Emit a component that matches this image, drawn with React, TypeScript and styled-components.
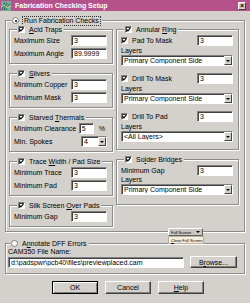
import React from 'react';
import styled, { createGlobalStyle } from 'styled-components';

const GlobalStyle = createGlobalStyle`
	html, body {
		margin: 0;
		padding: 0;
		background: #d4d0cc;
	}
	body {
		font-family: 'Liberation Sans', Arial, sans-serif;
		font-size: 7px;
		color: #000;
	}
	* {
		box-sizing: border-box;
	}
`;

const Window = styled.div`
	position: relative;
	width: 250px;
	height: 303px;
	background: #d4d0cc;
	overflow: hidden;
`;
const TitleBar = styled.div`
	display: flex;
	align-items: center;
	gap: 4px;
	height: 11px;
	padding: 0 4px 0 1px;
	background: #b5528c;
	color: #fff;
	font-weight: bold;
	font-size: 7px;
`;
const Title = styled.span`
	flex: 1;
`;
const CloseBox = styled.div`
	width: 8px;
	height: 8px;
	display: flex;
	align-items: center;
	justify-content: center;
	background: #d4d0cc;
	border: 1px solid;
	border-color: #fff #404040 #404040 #fff;
	color: #000;
	font-size: 7px;
	line-height: 1;
`;
const Body = styled.div`
	padding: 5px 5px 0 5px;
`;
const Group = styled.fieldset<{ $pad?: string; $top?: number }>`
	margin: ${({ $top }) => $top ?? 0}px 0 0;
	min-width: 0;
	padding: ${({ $pad }) => $pad || '0 5px 3px 4px'};
	border: 1px solid #8c8c8c;
	box-shadow: inset 1px 1px 0 #fff, 1px 1px 0 #fff;
`;
const Legend = styled.legend<{ $indent?: number }>`
	display: flex;
	align-items: center;
	gap: 4px;
	height: 9px;
	line-height: 9px;
	padding: 0 2px 0 1px;
	margin-left: ${({ $indent }) => $indent ?? 3}px;
	background: #d4d0cc;
	white-space: nowrap;
`;
const Focus = styled.span`
	outline: 1px dotted #333;
	padding: 0 1px;
	line-height: 8px;
`;
const Columns = styled.div`
	display: grid;
	grid-template-columns: 104px 123px;
	column-gap: 3px;
	align-items: start;
`;
const Stack = styled.div`
	display: flex;
	flex-direction: column;
	gap: 5px;
`;
const Row = styled.div<{ $h?: number }>`
	display: flex;
	align-items: center;
	height: ${({ $h }) => $h ?? 13}px;
	white-space: nowrap;
`;
const Label = styled.span`
	flex: 1;
`;
const SmallLabel = styled.div`
	height: 8px;
	line-height: 8px;
`;
const TextBox = styled.input<{ $w?: number }>`
	width: ${({ $w }) => $w ?? 36}px;
	height: 11px;
	padding: 0 2px;
	margin: 0;
	font: inherit;
	font-size: 7px;
	color: #000;
	background: #fff;
	border: 1px solid;
	border-color: #808080 #fff #fff #808080;
	box-shadow: inset 1px 1px 0 #404040;
	outline: none;
`;
const PathBox = styled(TextBox)`
	flex: 1;
`;
const Unit = styled.span`
	margin-left: 5px;
	margin-right: 2px;
`;
const Combo = styled.div<{ $w?: number }>`
	display: flex;
	align-items: center;
	width: ${({ $w }) => ($w ? `${$w}px` : '100%')};
	height: 11px;
	padding-left: 2px;
	background: #fff;
	border: 1px solid;
	border-color: #808080 #fff #fff #808080;
	box-shadow: inset 1px 1px 0 #404040;
	white-space: nowrap;
`;
const ComboText = styled.span`
	flex: 1;
	overflow: hidden;
`;
const ComboButton = styled.span`
	width: 8px;
	height: 9px;
	display: flex;
	align-items: center;
	justify-content: center;
	background: #d4d0cc;
	border: 1px solid;
	border-color: #fff #404040 #404040 #fff;
`;
const Arrow = styled.span`
	width: 0;
	height: 0;
	border-left: 2px solid transparent;
	border-right: 2px solid transparent;
	border-top: 2px solid #000;
`;
const Box = styled.span`
	width: 7px;
	height: 7px;
	flex: none;
	display: inline-flex;
	background: #fff;
	border: 1px solid;
	border-color: #808080 #fff #fff #808080;
	box-shadow: inset 1px 1px 0 #404040;
`;
const Radio = styled.span<{ $on?: boolean }>`
	width: 7px;
	height: 7px;
	flex: none;
	border-radius: 50%;
	background: #fff;
	border: 1px solid #808080;
	display: inline-flex;
	align-items: center;
	justify-content: center;
	&::after {
		content: '';
		width: 2px;
		height: 2px;
		border-radius: 50%;
		background: ${({ $on }) => ($on ? '#000' : 'transparent')};
	}
`;
const CheckLine = styled.span`
	display: flex;
	align-items: center;
	gap: 4px;
	flex: 1;
`;
const Triplet = styled.div`
	display: flex;
	flex-direction: column;
	& + & {
		margin-top: 6px;
	}
`;
const FileRow = styled.div`
	display: flex;
	align-items: center;
	gap: 6px;
	height: 12px;
`;
const Button = styled.div<{ $w?: number; $h?: number; $default?: boolean }>`
	width: ${({ $w }) => $w ?? 46}px;
	height: ${({ $h }) => $h ?? 13}px;
	display: flex;
	align-items: center;
	justify-content: center;
	background: #d4d0cc;
	border: 1px solid;
	border-color: ${({ $default }) =>
		$default ? '#000' : '#fff #404040 #404040 #fff'};
	box-shadow: ${({ $default }) =>
		$default
			? 'inset 1px 1px 0 #fff, inset -1px -1px 0 #808080'
			: 'inset -1px -1px 0 #808080'};
`;
const ButtonRow = styled.div`
	display: flex;
	gap: 7px;
	padding-left: 47px;
	margin-top: 7px;
`;
const FullScreenBar = styled.div`
	position: absolute;
	left: 168px;
	top: 228px;
	width: 35px;
	height: 8px;
	display: flex;
	align-items: center;
	justify-content: space-between;
	padding: 0 2px;
	background: #c8c4c0;
	border: 1px solid;
	border-color: #fff #606060 #606060 #fff;
	font-size: 4px;
	white-space: nowrap;
`;
const FullScreenMenu = styled.div`
	position: absolute;
	left: 168px;
	top: 236px;
	width: 36px;
	height: 8px;
	display: flex;
	align-items: center;
	padding: 0 2px;
	background: #f4efdc;
	border: 1px solid #b8b0a0;
	font-size: 4px;
	white-space: nowrap;
`;

function Check() {
	return (
		<Box>
			<svg width="5" height="5" viewBox="0 0 5 5">
				<path d="M0.6 2.4 L1.9 3.8 L4.4 0.8" fill="none" stroke="#000" strokeWidth="1.1" />
			</svg>
		</Box>
	);
}

function AppIcon() {
	return (
		<svg width="10" height="10" viewBox="0 0 10 10">
			<rect width="10" height="10" fill="#7aa89a" />
			<path d="M1 9 C2 5 3 3 4 1 M3 9 C4 6 5 4 6 2 M5 9 C6 6 7 5 9 3" stroke="#1d6b5a" strokeWidth="1" fill="none" />
			<path d="M0 6 L3 4 L6 7 L10 5" stroke="#d8e8a0" strokeWidth="0.8" fill="none" />
		</svg>
	);
}

function Field({ label, value, w }: { label: string; value: string; w?: number }) {
	return (
		<Row>
			<Label>{label}</Label>
			<TextBox $w={w} defaultValue={value} readOnly />
		</Row>
	);
}

function Dropdown({ text, w }: { text: string; w?: number }) {
	return (
		<Combo $w={w}>
			<ComboText>{text}</ComboText>
			<ComboButton>
				<Arrow />
			</ComboButton>
		</Combo>
	);
}

function CheckGroup({
	title,
	pad,
	children,
}: {
	title: React.ReactNode;
	pad?: string;
	children: React.ReactNode;
}) {
	return (
		<Group $pad={pad}>
			<Legend>
				<Check />
				<span>{title}</span>
			</Legend>
			{children}
		</Group>
	);
}

function LayerCheck({ label, value, layer }: { label: string; value: string; layer: string }) {
	return (
		<Triplet>
			<Row>
				<CheckLine>
					<Check />
					{label}
				</CheckLine>
				<TextBox defaultValue={value} readOnly />
			</Row>
			<SmallLabel>Layers</SmallLabel>
			<Dropdown text={layer} />
		</Triplet>
	);
}

export default function App() {
	return (
		<Window>
			<GlobalStyle />
			<TitleBar>
				<AppIcon />
				<Title>Fabrication Checking Setup</Title>
				<CloseBox>×</CloseBox>
			</TitleBar>
			<Body>
				<Group $pad="0 5px 4px 3px">
					<Legend $indent={2}>
						<Radio $on />
						<Focus>Run Fabrication Checks</Focus>
					</Legend>
					<Columns>
						<Stack>
							<CheckGroup title={<><u>A</u>cid Traps</>}>
								<Field label="Maximum Size" value="3" />
								<Field label="Maximum Angle" value="89.9999" />
							</CheckGroup>
							<CheckGroup title={<><u>S</u>livers</>}>
								<Field label="Minimum Copper" value="3" />
								<Field label="Minimum Mask" value="3" />
							</CheckGroup>
							<CheckGroup title={<>Starved <u>T</u>hermals</>}>
								<Row>
									<Label>Minimum Clearance</Label>
									<TextBox $w={15} defaultValue="5" readOnly />
									<Unit>%</Unit>
								</Row>
								<Row>
									<Label>Min. Spokes</Label>
									<Dropdown text="4" w={26} />
								</Row>
							</CheckGroup>
							<CheckGroup title={<>Trace <u>W</u>idth / Pad Size</>}>
								<Field label="Minimum Trace" value="3" />
								<Field label="Minimum Pad" value="3" />
							</CheckGroup>
							<CheckGroup title={<>Silk Screen <u>O</u>ver Pads</>}>
								<Field label="Minimum Gap" value="3" />
							</CheckGroup>
						</Stack>
						<Stack>
							<CheckGroup title={<>Annular <u>R</u>ing</>} pad="0 5px 7px 4px">
								<LayerCheck label="Pad To Mask" value="3" layer="Primary Component Side" />
								<LayerCheck label="Drill To Mask" value="3" layer="Primary Component Side" />
								<LayerCheck label="Drill To Pad" value="3" layer="<All Layers>" />
							</CheckGroup>
							<CheckGroup title={<>So<u>l</u>der Bridges</>} pad="0 5px 9px 4px">
								<Row $h={12}>
									<Label>Minimum Gap</Label>
									<TextBox defaultValue="3" readOnly />
								</Row>
								<SmallLabel>Layers</SmallLabel>
								<Dropdown text="Primary Component Side" />
							</CheckGroup>
						</Stack>
					</Columns>
				</Group>
				<Group $pad="0 7px 5px 2px" $top={7}>
					<Legend $indent={2}>
						<Radio />
						<span>
							A<u>n</u>notate DFF Errors
						</span>
					</Legend>
					<SmallLabel>CAM350 File Name:</SmallLabel>
					<FileRow>
						<PathBox defaultValue="d:\padspwr\pcb40\files\previewplaced.cam" readOnly />
						<Button $w={47} $h={12}>
							B<u>r</u>owse...
						</Button>
					</FileRow>
				</Group>
				<ButtonRow>
					<Button $default>OK</Button>
					<Button>Cancel</Button>
					<Button>
						<u>H</u>elp
					</Button>
				</ButtonRow>
			</Body>
			<FullScreenBar>
				<span>Full Screen</span>
				<Arrow />
			</FullScreenBar>
			<FullScreenMenu>
				<span>
					<u>C</u>lose Full Screen
				</span>
			</FullScreenMenu>
		</Window>
	);
}
